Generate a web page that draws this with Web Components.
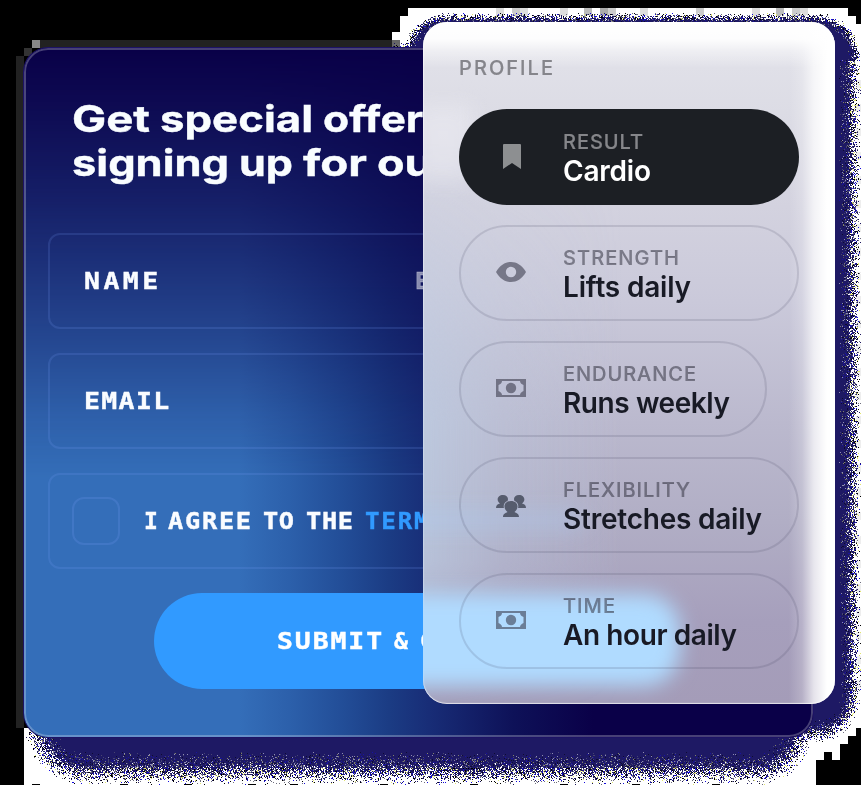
<!DOCTYPE html>
<html lang="en">
<head>
<meta charset="utf-8">
<title>Profile</title>
<style>
html,body{margin:0;background:#000;overflow:hidden}
body{width:861px;height:785px;font-family:Inter,"Liberation Sans",sans-serif}
</style>
</head>
<body>
<app-stage>
  <signup-card slot="form">
    <form-field label="NAME" w="73" hint="E"></form-field>
    <form-field label="EMAIL" w="84"></form-field>
    <form-field check></form-field>
  </signup-card>
  <profile-card slot="profile">
    <stat-pill icon="mark" label="RESULT" lw="79" vw="87" active>Cardio</stat-pill>
    <stat-pill icon="eye" label="STRENGTH" lw="115" vw="127">Lifts daily</stat-pill>
    <stat-pill icon="cash" label="ENDURANCE" lw="132" vw="166" narrow>Runs weekly</stat-pill>
    <stat-pill icon="team" label="FLEXIBILITY" lw="126" vw="198">Stretches daily</stat-pill>
    <stat-pill icon="cash" label="TIME" lw="51" vw="173">An hour daily</stat-pill>
  </profile-card>
</app-stage>
<script>
const shadow = (el, html) => { const r = el.attachShadow({mode:'open'}); r.innerHTML = html; return r; };

// Text set to a given width, by letter spacing or by widening the glyphs.
customElements.define('fit-text', class extends HTMLElement {
  connectedCallback() {
    if (this.shadowRoot) return;
    const w = +this.getAttribute('w');
    const t = this.getAttribute('text');
    const r = shadow(this, `<style>:host{display:block;flex:none;white-space:pre;width:${w}px}span{display:inline-block;transform-origin:0 50%}</style><span></span>`);
    const s = r.querySelector('span');
    s.textContent = t;
    const n = s.getBoundingClientRect().width;
    const wide = +this.getAttribute('wide') || 1;
    if (this.hasAttribute('stretch')) { s.style.transform = `scaleX(${w / n})`; return; }
    if (wide !== 1) s.style.transform = `scaleX(${wide})`;
    if (t.length > 1) s.style.letterSpacing = ((w / wide - n + 1) / (t.length - 1)) + 'px';
  }
});

customElements.define('grain-shadow', class extends HTMLElement {
  connectedCallback() {
    const r = shadow(this, '<style>:host,canvas{display:block;width:861px;height:785px}</style><canvas width="861" height="785"></canvas>');
    const c = r.querySelector('canvas').getContext('2d');
    const box = (f, x, y, x2, y2) => { c.fillStyle = f; c.fillRect(x, y, x2 - x, y2 - y); };
    box('#000', 0, 0, 861, 785);
    box('#222', 40, 40, 392, 48); box('#888', 32, 40, 40, 48);
    box('#333', 24, 48, 32, 56); box('#222', 16, 56, 24, 728);
    box('#fff', 408, 8, 848, 16); box('#fff', 400, 16, 856, 24);
    box('#fff', 400, 24, 861, 32); box('#fff', 392, 32, 861, 728);
    box('#666', 392, 40, 400, 48);
    [[496,'#ddd'],[512,'#ccc'],[520,'#ddd'],[560,'#ddd'],[584,'#bbb'],[600,'#aaa'],[608,'#ccc'],[640,'#ddd'],[696,'#ccc'],[752,'#ddd'],[776,'#bbb'],[792,'#ccc'],[800,'#ddd']].forEach(([x, f]) => box(f, x, 8, x + 8, 16));
    box('#fff', 24, 728, 856, 736); box('#fff', 24, 736, 848, 744);
    box('#fff', 24, 744, 840, 752); box('#fff', 24, 752, 824, 760);
    box('#fff', 832, 752, 840, 760); box('#fff', 24, 760, 816, 785);
    for (let y = 80; y < 700; y += 24) box(y % 48 ? '#eee' : '#e2e2e2', 856, y, 861, y + 8);
    const img = c.getImageData(0, 0, 861, 785), d = img.data;
    let seed = 77;
    const rnd = () => (seed = (seed * 1664525 + 1013904223) >>> 0) / 4294967296;
    const sdf = (x, y, l, t, r2, b, q) => {
      const dx = Math.abs(x - (l + r2) / 2) - (r2 - l) / 2 + q, dy = Math.abs(y - (t + b) / 2) - (b - t) / 2 + q;
      return Math.hypot(Math.max(dx, 0), Math.max(dy, 0)) + Math.min(Math.max(dx, dy), 0) - q;
    };
    for (let y = 0; y < 785; y++) for (let x = 0; x < 861; x++) {
      const i = (y * 861 + x) * 4;
      if (d[i] < 100) continue;
      const a = x < 835 ? -sdf(x, y, 25, 40, 814, 785, 58) / 35 : 0;
      const b = -sdf(x, y, 401, 12, 861, 742, 46) / (y < 60 ? 14 : 23);
      const k = Math.max(a, b, 0);
      if (k <= 0) continue;
      const m = rnd();
      let p = null;
      if (m < k * 1.2 - .16) p = [30, 25, 100];
      else if (rnd() < Math.min(1, k * 1.5)) {
        const z = rnd();
        p = z < .2 ? [0, 0, 0] : z < .34 ? [20, 10, 220] : z < .44 ? [225, 230, 110] : z < .66 ? [110, 110, 125] : z < .82 ? [28, 22, 92] : [255, 255, 255];
        if (k > .5) p = p.map((v, j) => (v + [30, 25, 100][j]) / 2);
      }
      if (p) { d[i] = p[0]; d[i + 1] = p[1]; d[i + 2] = p[2]; }
    }
    c.putImageData(img, 0, 0);
    box('#000', 32, 784, 40, 785);
    [120, 184, 248, 290, 380, 470, 560, 632, 712].forEach(x => box('#000', x, 784, x + 8, 785));
  }
});

customElements.define('app-stage', class extends HTMLElement {
  connectedCallback() {
    shadow(this, `<style>
      :host{display:grid;width:861px;height:785px}
      grain-shadow,.f,.p{grid-area:1/1}
      .f,.p{isolation:isolate}
      .f{padding:48px 0 0 24px}.p{padding:22px 0 0 423px;z-index:1}
    </style><grain-shadow></grain-shadow>
    <div class="f"><slot name="form"></slot></div><div class="p"><slot name="profile"></slot></div>`);
  }
});

customElements.define('signup-card', class extends HTMLElement {
  connectedCallback() {
    shadow(this, `<style>
      :host{display:grid;isolation:isolate;box-sizing:border-box;width:789px;height:689px;border-radius:24px;overflow:hidden;background:#0a0048;box-shadow:0 0 0 1px #1d1366}
      .glow,.shade,.edge,.body{grid-area:1/1;min-width:0}
      .glow{background:linear-gradient(90deg,#346eb9 0,#346eb9 215px,#2c60ab 265px,#224d97 320px,#1b3c84 365px,#182d77 405px,#0e1158 490px,#0a0048 570px);
        -webkit-mask-image:linear-gradient(180deg,transparent 0,rgba(0,0,0,.1) 62px,rgba(0,0,0,.28) 150px,rgba(0,0,0,.44) 215px,rgba(0,0,0,.64) 290px,rgba(0,0,0,.86) 365px,#000 430px)}
      .shade{background:radial-gradient(ellipse 270px 280px at 440px 100px,rgba(10,0,72,.65),rgba(10,0,72,0))}
      .edge{z-index:2;border:2px solid rgba(255,255,255,.25);border-radius:24px}
      .body{z-index:1;display:flex;flex-direction:column;padding:49px 24px 0;gap:24px;color:#f8fbff}
      h1{margin:0 0 22px 24px;height:90px;font:700 37px/44px Inter,sans-serif;-webkit-text-stroke:.4px;color:#f9fdff}
      h1 div{display:flex;gap:10px}
      .btn{display:flex;align-items:center;box-sizing:border-box;width:528px;height:96px;margin-left:106px;padding:0 0 1px 123px;gap:13px;border-radius:48px;background:#319aff;font:700 23px/28px "DejaVu Sans Mono",monospace;-webkit-text-stroke:.4px;color:#fff}
    </style>
    <div class="glow"></div><div class="shade"></div>
    <div class="body">
      <h1><div><fit-text stretch text="Get" w="78"></fit-text><fit-text stretch text="special" w="153"></fit-text><fit-text stretch text="offers" w="124"></fit-text></div>
      <div><fit-text stretch text="signing" w="157"></fit-text><fit-text stretch text="up" w="54"></fit-text><fit-text stretch text="for" w="64"></fit-text><fit-text stretch text="our" w="74"></fit-text></div></h1>
      <slot></slot>
      <div class="btn"><fit-text wide="1.15" text="SUBMIT" w="104"></fit-text><fit-text text="&amp;" w="13"></fit-text><fit-text wide="1.15" text="GET" w="50"></fit-text></div>
    </div><div class="edge"></div>`);
  }
});

customElements.define('form-field', class extends HTMLElement {
  connectedCallback() {
    const check = this.hasAttribute('check'), hint = this.getAttribute('hint');
    shadow(this, `<style>
      :host{display:flex;align-items:center;box-sizing:border-box;width:741px;height:96px;flex:none;border:2px solid rgba(125,160,255,.16);border-radius:12px;padding:0 0 1px ${check ? 22 : 34}px;font:700 23px/28px "DejaVu Sans Mono",monospace;-webkit-text-stroke:.4px;color:#fafcff}
      i{box-sizing:border-box;width:48px;height:48px;border:2px solid rgba(125,160,255,.18);border-radius:12px;margin-right:24px}
      .t{display:flex;gap:13px}.a{color:#319aff}.h{margin-left:258px;color:rgba(255,255,255,.5)}
    </style>` + (check
      ? `<i></i><div class="t"><fit-text text="I" w="11"></fit-text><fit-text wide="1.1" text="AGREE" w="82"></fit-text><fit-text wide="1.1" text="TO" w="30"></fit-text><fit-text wide="1.1" text="THE" w="46"></fit-text><fit-text wide="1.05" class="a" text="TERMS" w="79"></fit-text></div>`
      : `<fit-text wide="1.15" text="${this.getAttribute('label')}" w="${this.getAttribute('w')}"></fit-text>${hint ? `<fit-text class="h" text="${hint}" w="14"></fit-text>` : ''}`));
  }
});

customElements.define('profile-card', class extends HTMLElement {
  connectedCallback() {
    shadow(this, `<style>
      :host{display:grid;isolation:isolate;width:412px;height:682px;border-radius:24px;overflow:hidden;
        background:linear-gradient(180deg,#e3e3ea 0,#e0e0e8 45px,#dcdce5 90px,#d3d2df 185px,#cac9da 280px,#bbb9ce 400px,#b1aec5 500px,#a69fbc 600px,#a49cb8 682px)}
      .tint,.ghost,.link,.btn,.edge,.rim,.body{grid-area:1/1;min-width:0}
      .tint{background:linear-gradient(90deg,rgba(190,210,232,.85),rgba(190,210,232,.35) 80px,transparent 200px);-webkit-mask-image:linear-gradient(180deg,transparent 120px,rgba(0,0,0,.7) 400px,rgba(0,0,0,.7) 540px,transparent 690px)}
      .ghost{width:60px;height:74px;margin:84px 0 0 -10px;background:rgba(245,245,250,.4);filter:blur(11px)}
      .link{width:190px;height:16px;margin:490px 0 0 -30px;background:rgba(170,205,245,.45);filter:blur(11px)}
      .btn{width:297px;height:92px;margin:572px 0 0 -40px;border-radius:0 36px 36px 0;background:#b0dbff;filter:blur(10px)}
      .edge{background:linear-gradient(180deg,#fff 0,rgba(255,255,255,.93) 17px,rgba(255,255,255,.45) 29px,transparent 46px),linear-gradient(90deg,transparent 366px,rgba(255,255,255,.2) 379px,rgba(255,255,255,.72) 391px,#fff 404px)}
      .rim{box-shadow:inset 0 -1px 1px rgba(255,255,255,.7),inset 1px 0 1px rgba(255,255,255,.5);border-radius:24px}
      .body{z-index:1;display:flex;flex-direction:column;gap:20px;padding:32px 36px 0}
      .head{height:35px;font:500 20px/28px Inter,sans-serif;-webkit-text-stroke:.2px;color:#85858b}
    </style>
    <div class="tint"></div><div class="ghost"></div><div class="link"></div><div class="btn"></div><div class="edge"></div><div class="rim"></div>
    <div class="body"><div class="head"><fit-text text="PROFILE" w="93"></fit-text></div><slot></slot></div>`);
  }
});

const ICONS = {
  mark: '<path d="M8 4q0-1 1-1H25q1 0 1 1V28L17 22L8 28Z"/>',
  eye: '<path fill-rule="evenodd" d="M1 15C5 8 10.500 5 16 5s11 3 15 10c-4 7-9.500 10-15 10S5 22 1 15Zm15-5.200a5.200 5.200 0 1 0 0 10.400a5.200 5.200 0 1 0 0-10.400Z"/>',
  cash: '<path fill-rule="evenodd" d="M1 6H31V24H1ZM7 8C7 10 5.500 11 3.500 12V18C5.500 19 7 20 7 22H25C25 20 26.500 19 28.500 18V12C26.500 11 25 10 25 8Z"/><circle cx="16" cy="15" r="5.200"/>',
  team: '<path d="M1 19c0-3 2-4 4-4.500C0.500 11 3 6 8 6c4 0 6 3 4.500 6C9.500 13 8 16 9 19ZM31 19c0-3-2-4-4-4.500C31.500 11 29 6 24 6c-4 0-6 3-4.500 6C22.500 13 24 16 23 19Z"/><path d="M8 28c0-3 2.500-4 4.500-5C7 18.500 9.500 12 16 12s9 6.500 3.500 11c2 1 4.500 2 4.500 5Z"/>'
};

customElements.define('stat-pill', class extends HTMLElement {
  connectedCallback() {
    const on = this.hasAttribute('active'), ic = this.getAttribute('icon');
    shadow(this, `<style>
      :host{display:flex;align-items:center;box-sizing:border-box;width:${this.hasAttribute('narrow') ? 308 : 340}px;height:96px;flex:none;border-radius:48px;padding:0 0 0 ${on ? 36 : 34}px;${on ? '' : 'border:2px solid rgba(50,50,75,.14);'}background:${on ? '#1c1f24' : 'transparent'}}
      svg{width:32px;height:32px;margin-right:36px;fill:${on ? '#8d8f91' : ic === 'team' ? 'rgba(50,55,70,.72)' : 'rgba(50,50,65,.55)'}}
      .l{font:500 20px/28px Inter,sans-serif;-webkit-text-stroke:.2px;color:${on ? '#85868a' : 'rgba(50,50,62,.53)'}}
      .v{font:600 28px/30px Inter,sans-serif;color:${on ? '#fff' : '#181a25'}}
    </style><svg viewBox="0 0 32 32">${ICONS[ic]}</svg><div><fit-text class="l" text="${this.getAttribute('label')}" w="${this.getAttribute('lw')}"></fit-text><fit-text class="v" text="${this.textContent}" w="${this.getAttribute('vw')}"></fit-text></div>`);
  }
});
</script>
</body>
</html>
